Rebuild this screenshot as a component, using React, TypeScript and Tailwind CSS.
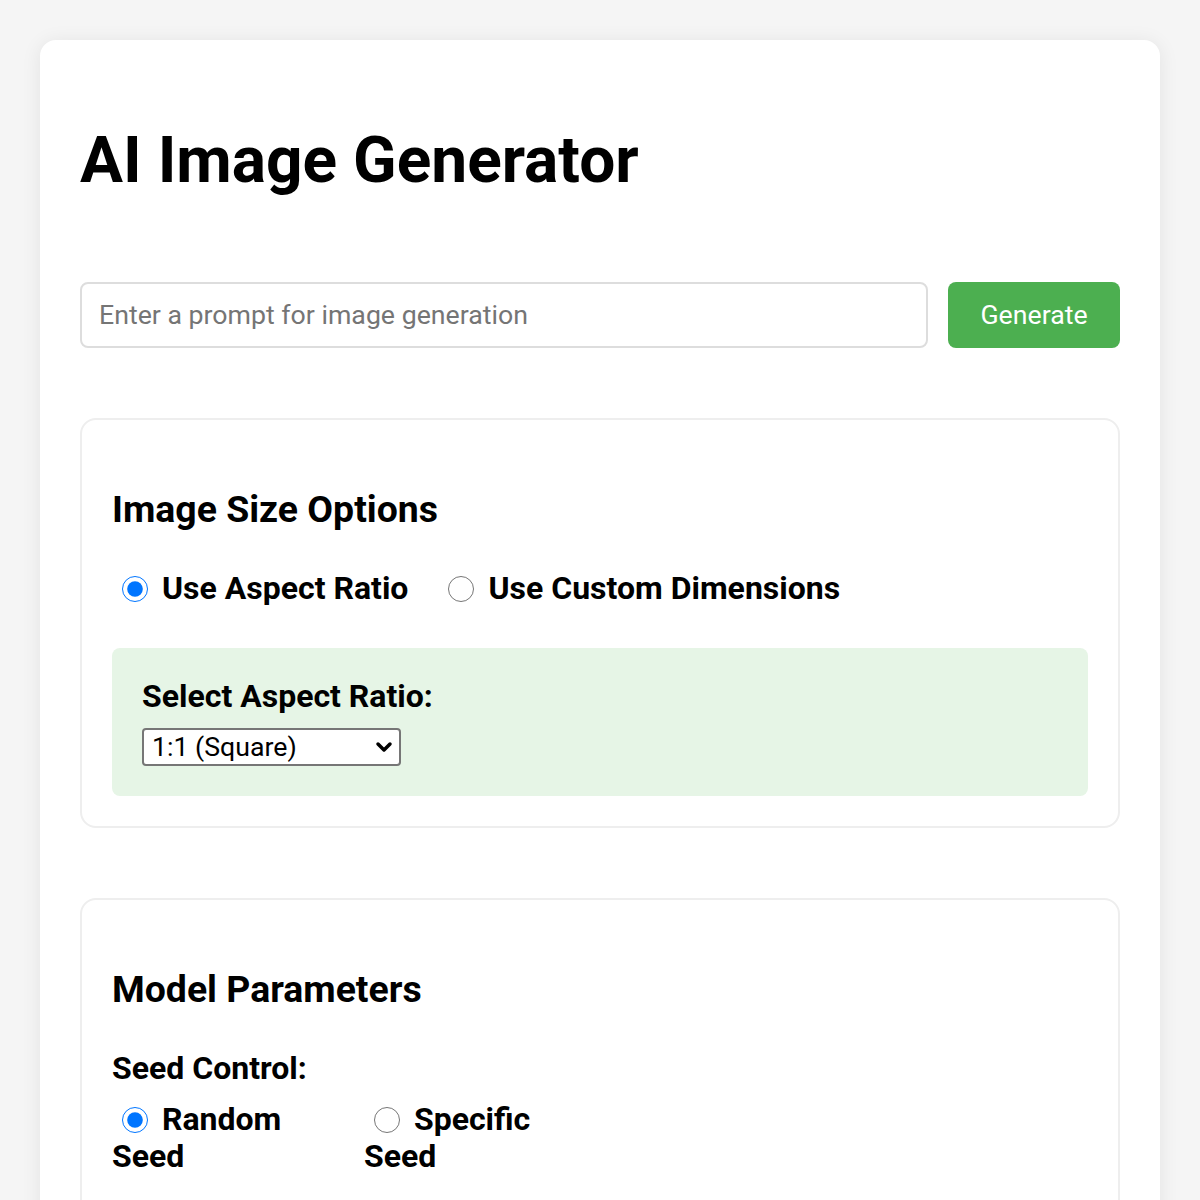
import { useState } from 'react';

function Radio({ checked, onChange }: { checked: boolean; onChange: () => void }) {
  return (
    <input
      type="radio"
      checked={checked}
      onChange={onChange}
      className="mt-[6px] mr-[6px] ml-[10px] h-[26px] w-[26px] shrink-0 accent-[#0075ff] align-[-3px]"
    />
  );
}

export default function App() {
  const [sizeMode, setSizeMode] = useState<'aspect' | 'custom'>('aspect');
  const [seedMode, setSeedMode] = useState<'random' | 'specific'>('random');
  const [prompt, setPrompt] = useState('');

  return (
    <div className="min-h-[1200px] bg-[#f5f5f5] px-[40px] pt-[40px] font-['Roboto',sans-serif] text-black">
      <div className="rounded-[16px] bg-white p-[40px] pb-[60px] shadow-[0_2px_20px_rgba(0,0,0,0.08)]">
        <h1 className="mt-[43px] mb-[84px] text-[64px] font-bold leading-[75px]">AI Image Generator</h1>

        {/* prompt row */}
        <div className="mb-[70px] flex gap-[20px]">
          <input
            value={prompt}
            onChange={(e) => setPrompt(e.target.value)}
            placeholder="Enter a prompt for image generation"
            className="h-[66px] flex-1 rounded-[8px] border-2 border-[#dddddd] px-[17px] text-[26.7px] outline-none placeholder:text-[#757575]"
          />
          <button className="h-[66px] w-[172px] rounded-[8px] bg-[#4caf50] text-[26.7px] text-white">Generate</button>
        </div>

        {/* size options */}
        <section className="mb-[70px] rounded-[16px] border-2 border-[#eeeeee] p-[30px]">
          <h3 className="my-[37px] text-[37.4px] font-bold leading-[44px]">Image Size Options</h3>
          <div className="flex pt-[2px] text-[32px] font-bold leading-[37.5px]">
            <label className="mr-[30px] flex items-start">
              <Radio checked={sizeMode === 'aspect'} onChange={() => setSizeMode('aspect')} />
              <span className="ml-[8px]">Use Aspect Ratio</span>
            </label>
            <label className="flex items-start">
              <Radio checked={sizeMode === 'custom'} onChange={() => setSizeMode('custom')} />
              <span className="ml-[8px]">Use Custom Dimensions</span>
            </label>
          </div>

          <div className="mt-[40px] rounded-[8px] bg-[#e6f5e6] p-[30px]">
            <label className="mb-[13px] block text-[32px] font-bold leading-[37.5px]">Select Aspect Ratio:</label>
            <div className="relative w-[259px]">
              <select className="h-[38px] w-full appearance-none rounded-[4px] border-2 border-[#767676] bg-white pl-[8px] text-[26.7px] leading-[30px] text-black outline-none">
                <option>1:1 (Square)</option>
                <option>16:9 (Landscape)</option>
                <option>9:16 (Portrait)</option>
                <option>4:3</option>
                <option>3:4</option>
              </select>
              <svg
                className="pointer-events-none absolute right-[8px] top-[12px] h-[14px] w-[18px]"
                viewBox="0 0 18 14"
                fill="none"
                stroke="black"
                strokeWidth="3.5"
                strokeLinecap="round"
                strokeLinejoin="round"
              >
                <path d="M3 4l6 6 6-6" />
              </svg>
            </div>
          </div>
        </section>

        {/* model params */}
        <section className="rounded-[16px] border-2 border-[#eeeeee] p-[30px]">
          <h3 className="mt-[37px] mb-[39px] text-[37.4px] font-bold leading-[44px]">Model Parameters</h3>
          <label className="mb-[13px] block text-[32px] font-bold leading-[37.5px]">Seed Control:</label>
          <div className="flex text-[32px] font-bold leading-[37.5px]">
            <label className="mr-[30px] block w-[222px]">
              <Radio checked={seedMode === 'random'} onChange={() => setSeedMode('random')} /> Random Seed
            </label>
            <label className="block w-[222px]">
              <Radio checked={seedMode === 'specific'} onChange={() => setSeedMode('specific')} /> Specific Seed
            </label>
          </div>
          <div className="h-[120px]" />
        </section>
      </div>
    </div>
  );
}
